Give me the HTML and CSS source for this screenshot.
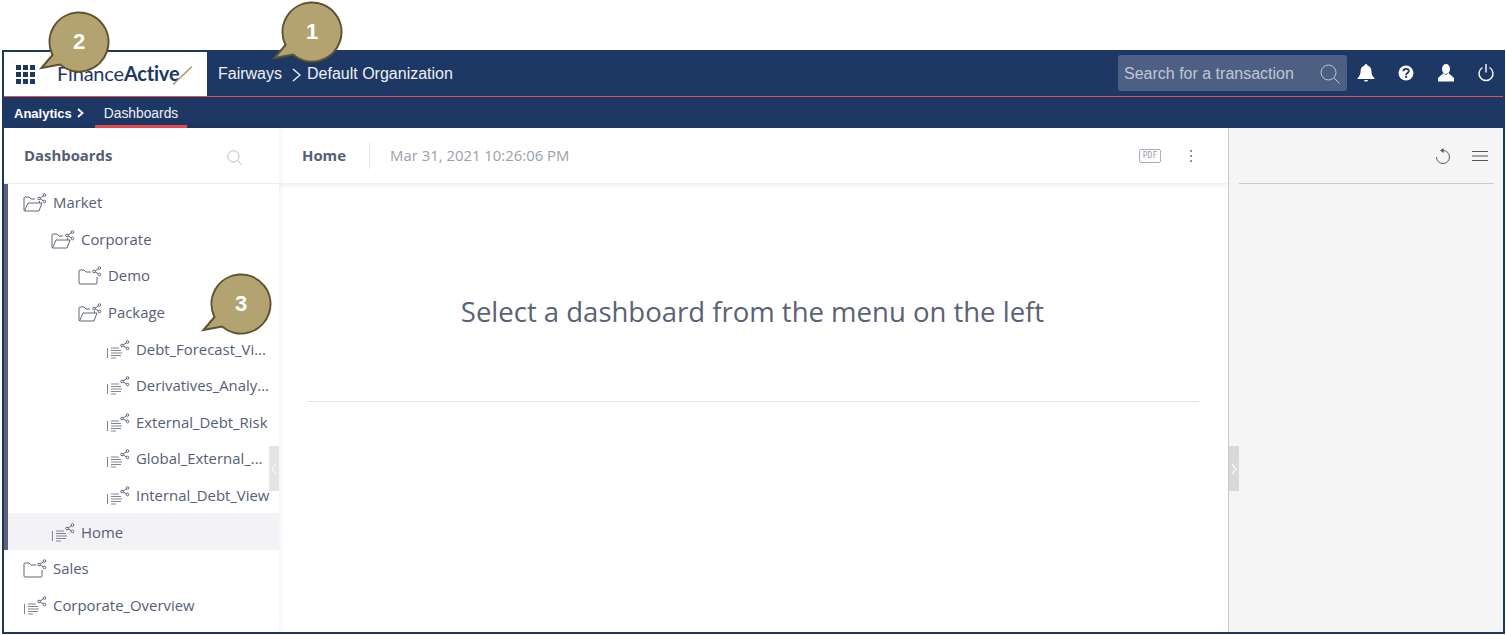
FILE: index.html
```html
<!DOCTYPE html>
<html lang="en">
  <head>
    <meta charset="UTF-8" />
    <title>Dashboards</title>
    <link rel="stylesheet" href="styles.css">
  </head>
  <body class="body">
    <svg class="sprites" width="0" height="0">
      <symbol id="i-nodes" viewBox="0 0 24 20">
        <path d="M16.500 5.500 21.500 2M16.500 5.500 21.500 8.500" fill="none" stroke="currentColor" stroke-width="1" />
        <circle cx="16" cy="5.500" r="1.300" fill="#fff" stroke="currentColor" />
        <circle cx="21.500" cy="2" r="1.300" fill="#fff" stroke="currentColor" />
        <circle cx="21.500" cy="8.500" r="1.300" fill="#fff" stroke="currentColor" />
      </symbol>
      <symbol id="i-closed" viewBox="0 0 24 20">
        <path d="M13 6H8L6 4H2Q1 4 1 5V17Q1 18 2 18H18Q19 18 19 17V11" fill="none" stroke="currentColor" />
        <use href="#i-nodes" />
      </symbol>
      <symbol id="i-open" viewBox="0 0 24 20">
        <path d="M12 6H8L6 4H2Q1 4 1 5V17Q1 18 2 18H16L19 10H5L1.500 18M16.500 8V10" fill="none" stroke="currentColor" />
        <use href="#i-nodes" />
      </symbol>
      <symbol id="i-board" viewBox="0 0 24 20">
        <path d="M1.500 8V18M5 8H13M5 10.500H15M5 13H16M5 15.500H15M5 18H10" fill="none" stroke="currentColor" stroke-width="0.800" />
        <use href="#i-nodes" />
      </symbol>
      <symbol id="i-bubble" viewBox="0 0 72 66">
        <path d="M3.500 57 14.500 44A29.500 29.500 0 1 1 22 53.600Z" fill="#b3a370" stroke="#5f5232" stroke-width="2" />
      </symbol>
      <symbol id="i-search" viewBox="0 0 20 20">
        <circle cx="8.500" cy="8.500" r="7.500" fill="none" stroke="currentColor" />
        <path d="M14 14 19.500 19.500" stroke="currentColor" />
      </symbol>
    </svg>

    <div class="frame">
      <header class="top">
        <div class="brand">
          <svg class="brand__grid" viewBox="0 0 19 19" fill="#1d3864">
            <rect width="5" height="5" /><rect x="7" width="5" height="5" /><rect x="14" width="5" height="5" />
            <rect y="7" width="5" height="5" /><rect x="7" y="7" width="5" height="5" /><rect x="14" y="7" width="5" height="5" />
            <rect y="14" width="5" height="5" /><rect x="7" y="14" width="5" height="5" /><rect x="14" y="14" width="5" height="5" />
          </svg>
          <span class="brand__name">Finance<b class="brand__bold">Active</b></span>
          <svg class="brand__slash" viewBox="0 0 19 19"><path d="M0 18.500 19 .5" stroke="#a8975f" stroke-width="1.300" /></svg>
        </div>
        <nav class="crumbs">
          <span>Fairways</span>
          <svg class="crumbs__arrow" viewBox="0 0 9 14"><path d="M1 1 8 7 1 13" fill="none" stroke="currentColor" stroke-width="1.400" /></svg>
          <span>Default Organization</span>
        </nav>
        <div class="search">
          <span class="search__text">Search for a transaction</span>
          <svg class="search__icon"><use href="#i-search" /></svg>
        </div>
        <div class="tools">
          <svg class="tool" viewBox="0 0 18 18" fill="#fff"><path d="M9 0a1.500 1.500 0 0 0-1.400 1.600C5 2.300 3.700 4.400 3.600 7c-.1 3.300-1 5.300-3 7v1h16.800v-1c-2-1.700-2.900-3.700-3-7-.1-2.600-1.400-4.700-4-5.400A1.500 1.500 0 0 0 9 0ZM6.800 16a2.300 2.300 0 0 0 4.400 0Z" /></svg>
          <svg class="tool" viewBox="0 0 18 18"><circle cx="9" cy="9" r="7.500" fill="#fff" /><path d="M6.300 7.200C6.400 5.600 7.600 4.800 9.100 4.800c1.600 0 2.700 1 2.700 2.200 0 2-2.700 1.900-2.700 3.900" fill="none" stroke="#1d3864" stroke-width="1.800" /><rect x="8.100" y="11.800" width="2" height="2" fill="#1d3864" /></svg>
          <svg class="tool" viewBox="0 0 18 18" fill="#fff"><ellipse cx="9" cy="5" rx="4" ry="5" /><path d="M6.500 9 1 14v3.500h16V14L11.500 9 9 11Z" /></svg>
          <svg class="tool" viewBox="0 0 18 18" fill="none" stroke="#fff" stroke-width="1.400"><path d="M5.500 3.500a7 7 0 1 0 7 0M9 0v8.500" /></svg>
        </div>
      </header>

      <div class="sub">
        <span class="sub__parent">Analytics</span>
        <svg class="sub__arrow" viewBox="0 0 7 10"><path d="M1 1 5.500 5 1 9" fill="none" stroke="#fff" stroke-width="1.800" /></svg>
        <span class="sub__tab">Dashboards</span>
      </div>

      <div class="content">
        <aside class="side">
          <div class="side__head">
            <span class="side__title">Dashboards</span>
            <svg class="side__search"><use href="#i-search" /></svg>
          </div>
          <div class="tree tree--active">
            <div class="row row--0"><svg class="row__icon"><use href="#i-open" /></svg>Market</div>
            <div class="row row--1"><svg class="row__icon"><use href="#i-open" /></svg>Corporate</div>
            <div class="row row--2"><svg class="row__icon"><use href="#i-closed" /></svg>Demo</div>
            <div class="row row--2"><svg class="row__icon"><use href="#i-open" /></svg>Package</div>
            <div class="row row--3"><svg class="row__icon"><use href="#i-board" /></svg>Debt_Forecast_Vi...</div>
            <div class="row row--3"><svg class="row__icon"><use href="#i-board" /></svg>Derivatives_Analy...</div>
            <div class="row row--3"><svg class="row__icon"><use href="#i-board" /></svg>External_Debt_Risk</div>
            <div class="row row--3"><svg class="row__icon"><use href="#i-board" /></svg>Global_External_...</div>
            <div class="row row--3"><svg class="row__icon"><use href="#i-board" /></svg>Internal_Debt_View</div>
            <div class="row row--1 row--current"><svg class="row__icon"><use href="#i-board" /></svg>Home</div>
          </div>
          <div class="tree">
            <div class="row row--0"><svg class="row__icon"><use href="#i-closed" /></svg>Sales</div>
            <div class="row row--0"><svg class="row__icon"><use href="#i-board" /></svg>Corporate_Overview</div>
          </div>
          <div class="handle handle--left">
            <svg class="handle__arrow" viewBox="0 0 6 12"><path d="M5 1 1 6 5 11" fill="none" stroke="#f4f4f4" stroke-width="1.500" /></svg>
          </div>
        </aside>

        <main class="main">
          <div class="main__head">
            <span class="main__title">Home</span>
            <span class="main__date">Mar 31, 2021 10:26:06 PM</span>
            <span class="pdf">PDF</span>
            <span class="dots"><i></i><i></i><i></i></span>
          </div>
          <div class="message">
            <h1 class="message__text">Select a dashboard from the menu on the left</h1>
          </div>
        </main>

        <aside class="right">
          <div class="right__head">
            <svg class="right__icon" viewBox="0 0 16 18" fill="none" stroke="#555"><path d="M8 3.500a6.500 6.500 0 1 1-6.500 6.500" /><path d="M8.500 1 5 3.500 8.500 6Z" fill="#555" stroke="none" /></svg>
            <svg class="right__icon right__icon--menu" viewBox="0 0 16 12" stroke="#555"><path d="M0 1.500H16M0 6H16M0 10.500H16" /></svg>
          </div>
          <div class="handle handle--right">
            <svg class="handle__arrow" viewBox="0 0 6 12"><path d="M1 1 5 6 1 11" fill="none" stroke="#f4f4f4" stroke-width="1.500" /></svg>
          </div>
        </aside>
      </div>
    </div>

    <div class="callout callout--1"><svg class="callout__shape"><use href="#i-bubble" /></svg><span class="callout__num">1</span></div>
    <div class="callout callout--2"><svg class="callout__shape"><use href="#i-bubble" /></svg><span class="callout__num">2</span></div>
    <div class="callout callout--3"><svg class="callout__shape"><use href="#i-bubble" /></svg><span class="callout__num">3</span></div>
  </body>
</html>
```

FILE: styles.css
```css
* {
  box-sizing: border-box;
}
.body {
  margin: 0;
  padding: 50px 1px 0 2px;
  height: 635px;
  overflow: hidden;
  background-color: #fff;
  font-family: "Open Sans", sans-serif;
  color: #555e75;
}
.sprites {
  position: absolute;
}
.frame {
  display: flex;
  flex-direction: column;
  height: 584px;
  border: 2px solid #1d3864;
}

/* top bar */
.top {
  display: flex;
  align-items: center;
  height: 45px;
  flex-shrink: 0;
  background-color: #1d3864;
  border-bottom: 1px solid #e84b50;
  font-family: "Liberation Sans", sans-serif;
  font-size: 16px;
  color: #eef1f5;
}
.brand {
  display: flex;
  align-items: center;
  width: 203px;
  height: 44px;
  padding-left: 12px;
  background-color: #fff;
}
.brand__grid {
  width: 19px;
  height: 19px;
}
.brand__name {
  margin: -2px 0 0 22px;
  font-family: Lato, sans-serif;
  font-size: 20px;
  font-weight: 400;
  letter-spacing: -0.2px;
  color: #1d3864;
}
.brand__bold {
  font-weight: 700;
}
.brand__slash {
  width: 19px;
  height: 19px;
  margin: 3px 0 0 -6px;
}
.crumbs {
  display: flex;
  align-items: center;
  margin: 0 0 0 11px;
  flex-grow: 1;
}
.crumbs__arrow {
  width: 9px;
  height: 14px;
  margin: 1px 6px 0 10px;
}
.search {
  display: flex;
  align-items: center;
  justify-content: space-between;
  width: 229px;
  height: 36px;
  margin-top: -2px;
  padding: 0 7px 0 6px;
  background-color: #4d5f82;
  border-radius: 3px;
  color: #c0c7d4;
}
.search__text {
  margin-top: 2px;
}
.search__icon {
  width: 20px;
  height: 20px;
  margin-top: 2px;
}
.tools {
  display: flex;
  align-items: center;
  gap: 22px;
  margin: -3px 8px 0 10px;
}
.tool {
  width: 18px;
  height: 18px;
}

/* second bar */
.sub {
  display: flex;
  align-items: center;
  height: 31px;
  flex-shrink: 0;
  padding-left: 10px;
  background-color: #1d3864;
  font-family: "Liberation Sans", sans-serif;
  font-size: 13px;
  color: #eef1f5;
}
.sub__parent {
  margin-top: 1px;
  font-weight: bold;
  color: #fff;
}
.sub__arrow {
  width: 7px;
  height: 10px;
  margin-left: 5px;
}
.sub__tab {
  display: flex;
  align-items: center;
  height: 31px;
  margin-left: 11px;
  padding: 4px 9px 0;
  border-bottom: 3px solid #e84b50;
  font-size: 13.8px;
}

/* columns */
.content {
  display: flex;
  flex-grow: 1;
  min-height: 0;
}
.side {
  position: relative;
  width: 275px;
  flex-shrink: 0;
  background-color: #fff;
  box-shadow: 2px 0 6px rgba(0, 0, 0, 0.05);
  z-index: 1;
}
.side__head {
  display: flex;
  align-items: center;
  justify-content: space-between;
  height: 56px;
  padding: 0 37px 0 20px;
  border-bottom: 1px solid #ededed;
}
.side__title {
  margin-top: -2px;
  font-size: 14.9px;
  font-weight: 700;
}
.side__search {
  width: 15px;
  height: 15px;
  margin-top: 3px;
  color: #a5a9b2;
}
.tree {
  border-left: 4px solid transparent;
}
.tree--active {
  border-left-color: #5a6278;
}
.row {
  display: flex;
  align-items: center;
  height: 36.6px;
  font-size: 14.9px;
  white-space: nowrap;
  color: #555e75;
}
.row__icon {
  width: 24px;
  height: 20px;
  margin: 2px 6px 0 0;
  flex-shrink: 0;
  color: #5f6679;
}
.row--0 {
  padding-left: 15px;
}
.row--1 {
  padding-left: 43px;
}
.row--2 {
  padding-left: 70px;
}
.row--3 {
  padding-left: 98px;
}
.row--current {
  background-color: #f3f3f7;
}
.handle {
  position: absolute;
  top: 318px;
  display: flex;
  align-items: center;
  justify-content: center;
  width: 10px;
  height: 45px;
}
.handle--left {
  right: 0;
  background-color: #e4e4e4;
}
.handle--right {
  left: 0;
  background-color: #d9d9d9;
}
.handle__arrow {
  width: 6px;
  height: 12px;
}

.main {
  flex-grow: 1;
  min-width: 0;
  background-color: #fff;
}
.main__head {
  display: flex;
  align-items: center;
  height: 55px;
  padding-left: 23px;
  box-shadow: 0 2px 5px rgba(0, 0, 0, 0.08);
}
.main__title {
  padding-right: 23px;
  border-right: 1px solid #e6e6e6;
  font-size: 14.9px;
  font-weight: 700;
  line-height: 27px;
}
.main__date {
  margin: -2px 0 0 20px;
  flex-grow: 1;
  font-size: 14.9px;
  color: #9a9fab;
}
.pdf {
  width: 22px;
  height: 14px;
  border: 1px solid #aaaeb8;
  border-radius: 2px;
  font-family: "DejaVu Sans Mono", monospace;
  font-size: 8px;
  line-height: 12px;
  text-align: center;
  color: #9a9fab;
}
.dots {
  display: flex;
  flex-direction: column;
  gap: 3px;
  margin: 0 36px 0 29px;
}
.dots i {
  width: 2px;
  height: 2px;
  background-color: #8f94a0;
}
.message {
  height: 219px;
  margin: 0 29px 0 28px;
  padding: 107px 1px 0 0;
  border-bottom: 1px solid #e5e5e5;
  text-align: center;
}
.message__text {
  margin: 0;
  font-size: 27.5px;
  font-weight: 400;
  line-height: 44px;
  color: #5a6275;
}

.right {
  position: relative;
  width: 275px;
  flex-shrink: 0;
  padding: 0 9px 0 10px;
  background-color: #f5f5f5;
  border-left: 1px solid #cacaca;
}
.right__head {
  display: flex;
  align-items: center;
  justify-content: flex-end;
  gap: 21px;
  height: 56px;
  padding-right: 6px;
  border-bottom: 1px solid #cacaca;
}
.right__icon {
  width: 16px;
  height: 18px;
}
.right__icon--menu {
  height: 12px;
}

/* numbered bubbles */
.callout {
  position: absolute;
  width: 72px;
  height: 66px;
  z-index: 2;
}
.callout--1 {
  left: 271px;
  top: 1px;
}
.callout--2 {
  left: 38px;
  top: 11px;
}
.callout--3 {
  left: 200px;
  top: 273px;
}
.callout__shape {
  position: absolute;
  width: 72px;
  height: 66px;
}
.callout__num {
  position: absolute;
  left: 11px;
  top: 1px;
  width: 60px;
  font-family: "Liberation Sans", sans-serif;
  font-size: 22px;
  font-weight: bold;
  line-height: 60px;
  text-align: center;
  color: #fff;
}
```
